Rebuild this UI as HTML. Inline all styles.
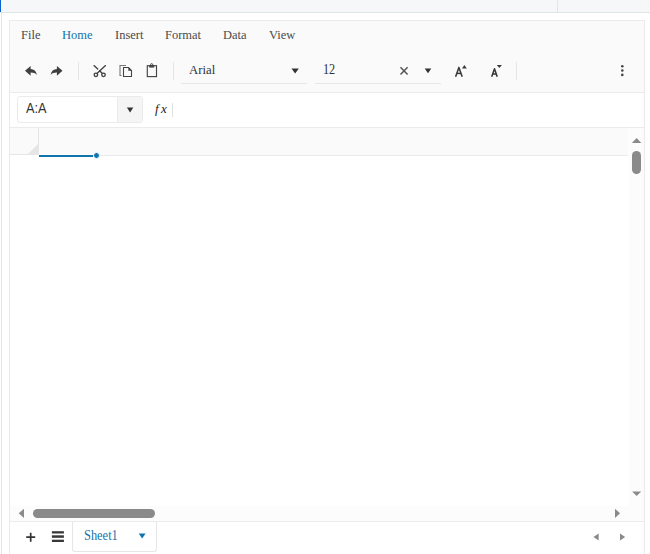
<!DOCTYPE html>
<html><head><meta charset="utf-8">
<style>
html,body{margin:0;padding:0;background:#fff;width:650px;height:554px;overflow:hidden;position:relative;}
div,span{box-sizing:border-box;}
.a{position:absolute;}
.serif{font-family:"Liberation Serif",serif;}
.sans{font-family:"Liberation Sans",sans-serif;}
.menu{position:absolute;top:27px;font-family:"Liberation Serif",serif;font-size:13px;color:#4a4a4a;line-height:16px;white-space:nowrap;transform:scale(0.96,1.02);transform-origin:0 12.4px;}
svg{position:absolute;overflow:visible;}
</style></head><body>
<!-- top strip -->
<div class="a" style="left:0;top:0;width:650px;height:12px;background:#f5f7f9;"></div>
<div class="a" style="left:0;top:12px;width:650px;height:1px;background:#dfe6e8;"></div>
<div class="a" style="left:0;top:0;width:1px;height:12px;background:#0d63cc;"></div>
<div class="a" style="left:557px;top:0;width:1px;height:12px;background:#dfe6e8;"></div>
<!-- left page line -->
<div class="a" style="left:1px;top:13px;width:1px;height:541px;background:#dfe6e8;"></div>

<!-- spreadsheet container -->
<div class="a" style="left:9px;top:20px;width:636px;height:540px;border:1px solid #ebebeb;"></div>

<!-- ribbon -->
<div class="a" style="left:10px;top:21px;width:634px;height:71px;background:#fafafa;"></div>
<div class="a" style="left:10px;top:92px;width:634px;height:1px;background:#ebebeb;"></div>

<div class="menu" style="left:21px;">File</div>
<div class="menu" style="left:62px;color:#1174ad;">Home</div>
<div class="menu" style="left:115px;">Insert</div>
<div class="menu" style="left:165px;">Format</div>
<div class="menu" style="left:223px;">Data</div>
<div class="menu" style="left:269px;">View</div>

<!-- toolbar separators -->
<div class="a" style="left:78px;top:62px;width:1px;height:18px;background:#e6e6e6;"></div>
<div class="a" style="left:173px;top:62px;width:1px;height:18px;background:#e6e6e6;"></div>
<div class="a" style="left:516px;top:62px;width:1px;height:18px;background:#e6e6e6;"></div>

<!-- undo -->
<svg style="left:0;top:0" width="650" height="554" viewBox="0 0 650 554">
  <path d="M25 70.8 L30.6 65.9 L30.6 69.1 C34 69.2 36.3 71.3 36.9 74.9 C35.5 73.4 33.5 72.6 30.6 72.6 L30.6 75.7 Z" fill="#404040"/>
  <path d="M 62.5 70.8 L 56.9 65.9 L 56.9 69.1 C 53.5 69.2 51.2 71.3 50.6 74.9 C 52.0 73.4 54.0 72.6 56.9 72.6 L 56.9 75.7 Z" fill="#404040"/>
  <!-- cut -->
  <g fill="none" stroke="#404040" stroke-width="1.35" stroke-linecap="round">
    <path d="M94 65.6 L97.7 69"/>
    <path d="M105.5 65.6 L97.2 73.2"/>
    <path d="M99.6 70.8 L102.2 73.3"/>
    <circle cx="95.9" cy="74.8" r="1.75"/>
    <circle cx="103.5" cy="74.8" r="1.75"/>
  </g>
  <!-- copy -->
  <path d="M126 65.5 L120 65.5 L120 75.5 L121.5 75.5" fill="none" stroke="#777" stroke-width="1.1"/>
  <path d="M123.5 67.5 L128.5 67.5 L131.5 70.5 L131.5 76.5 L123.5 76.5 Z" fill="none" stroke="#444" stroke-width="1.1"/>
  <path d="M128.3 67 L132 70.7 L128.3 70.7 Z" fill="#444"/>
  <!-- paste -->
  <rect x="147.3" y="65.7" width="9.2" height="10.9" fill="none" stroke="#444" stroke-width="1.15"/>
  <path d="M149.2 65 L154.2 65 L154.2 67.6 L149.2 67.6 Z" fill="#444"/>
  <circle cx="151.65" cy="64.7" r="1.05" fill="none" stroke="#444" stroke-width="1"/>
</svg>

<!-- font name -->
<div class="a serif" style="left:188.6px;top:62px;font-size:13px;line-height:16px;color:#333;transform:scale(0.98,1.02);transform-origin:0 12.4px;">Arial</div>
<svg style="left:0;top:0" width="650" height="554"><path d="M291.5 68.5 L298.8 68.5 L295.15 73.5 Z" fill="#333"/></svg>
<div class="a" style="left:181px;top:83px;width:126px;height:1px;background:#e6e6e6;"></div>

<!-- font size -->
<div class="a serif" style="left:322.6px;top:62px;font-size:13px;line-height:16px;color:#333;transform:scale(0.94,1.04);transform-origin:0 12.4px;">12</div>
<svg style="left:0;top:0" width="650" height="554">
  <path d="M400.5 67.3 L407.6 74.6 M407.6 67.3 L400.5 74.6" stroke="#555" stroke-width="1.5" fill="none"/>
  <path d="M424.7 68.5 L431.3 68.5 L428 73.3 Z" fill="#333"/>
</svg>
<div class="a" style="left:315px;top:83px;width:126px;height:1px;background:#e6e6e6;"></div>

<!-- font increase / decrease -->
<svg style="left:0;top:0" width="650" height="554">
  <g fill="none" stroke="#3a3a3a" stroke-width="1.55" stroke-linejoin="round">
    <path d="M455.6 76.8 L458.9 67.4 L462.2 76.8"/>
    <path d="M456.9 73.4 L460.9 73.4"/>
    <path d="M491.7 76.8 L494.5 68.8 L497.2 76.8"/>
    <path d="M492.8 74 L496.2 74"/>
  </g>
  <path d="M462 68.6 L466.8 68.6 L464.4 65 Z" fill="#3a3a3a"/>
  <path d="M496.8 65 L501.9 65 L499.35 67.9 Z" fill="#3a3a3a"/>
</svg>
<!-- more dots -->
<svg style="left:0;top:0" width="650" height="554" fill="#444">
  <circle cx="622.3" cy="66.2" r="1.3"/><circle cx="622.3" cy="70.5" r="1.3"/><circle cx="622.3" cy="74.9" r="1.3"/>
</svg>

<!-- formula bar -->
<div class="a" style="left:10px;top:127px;width:634px;height:1px;background:#ebebeb;"></div>
<div class="a" style="left:17px;top:96px;width:126px;height:27px;border:1px solid #ebebeb;border-radius:3px;background:#fff;overflow:hidden;">
  <div class="a" style="left:99px;top:0;width:26px;height:25px;background:#f5f5f5;border-left:1px solid #ebebeb;"></div>
</div>
<div class="a sans" style="left:26px;top:101px;font-size:13px;line-height:15px;color:#333;transform:scale(0.98,1.08);transform-origin:0 12px;">A:A</div>
<svg style="left:0;top:0" width="650" height="554"><path d="M126.9 107.4 L133.3 107.4 L130.1 112.6 Z" fill="#333"/></svg>
<div class="a serif" style="left:155px;top:101px;font-size:13px;line-height:16px;font-style:italic;letter-spacing:2.4px;color:#222;">fx</div>
<div class="a" style="left:172px;top:103px;width:1px;height:14px;background:#e0e0e0;"></div>

<!-- column header -->
<div class="a" style="left:10px;top:128px;width:618px;height:27px;background:#fafafa;"></div>
<div class="a" style="left:10px;top:154px;width:28px;height:1px;background:#e6e6e6;"></div>
<div class="a" style="left:10px;top:155px;width:29px;height:1px;background:#fff;"></div>
<div class="a" style="left:38px;top:128px;width:1px;height:27px;background:#e6e6e6;"></div>
<svg style="left:0;top:0" width="650" height="554"><path d="M28 154 L38 144 L38 154 Z" fill="#e6e6e6"/></svg>
<div class="a" style="left:39px;top:155px;width:589px;height:1px;background:#ebebeb;"></div>
<div class="a" style="left:39px;top:154px;width:55px;height:1px;background:#fff;"></div>
<div class="a" style="left:39px;top:155px;width:54px;height:2px;background:#1174ad;"></div>
<div class="a" style="left:93px;top:152px;width:7px;height:7px;border-radius:50%;background:#1174ad;border:1px solid #fff;"></div>

<!-- vertical scrollbar -->
<div class="a" style="left:628px;top:128px;width:1px;height:378px;background:#fff;"></div><div class="a" style="left:629px;top:128px;width:15px;height:378px;background:#fcfcfc;"></div>
<svg style="left:0;top:0" width="650" height="554" fill="#8a8a8a">
  <path d="M631.9 143 L641.3 143 L636.6 138 Z"/>
  <path d="M632.1 491.4 L641.2 491.4 L636.65 496 Z"/>
</svg>
<div class="a" style="left:632px;top:151px;width:9px;height:23px;border-radius:4.5px;background:#8a8a8a;"></div>

<!-- horizontal scrollbar -->
<div class="a" style="left:10px;top:506px;width:634px;height:15px;background:#fcfcfc;"></div>
<div class="a" style="left:10px;top:521px;width:634px;height:1px;background:#ebebeb;"></div>
<svg style="left:0;top:0" width="650" height="554" fill="#8a8a8a">
  <path d="M24 508.7 L24 518 L18.7 513.35 Z"/>
  <path d="M615 508.7 L615 518 L620 513.35 Z"/>
</svg>
<div class="a" style="left:33px;top:509px;width:122px;height:9px;border-radius:4.5px;background:#8a8a8a;"></div>

<!-- sheet tabs -->
<svg style="left:0;top:0" width="650" height="554">
  <path d="M26.2 537.2 L35.2 537.2 M30.7 532.7 L30.7 541.7" stroke="#333" stroke-width="1.7" fill="none"/>
  <g fill="#383838"><rect x="51.9" y="531.2" width="12" height="2.3"/><rect x="51.9" y="535.3" width="12" height="2.5"/><rect x="51.9" y="539.7" width="12" height="2.3"/></g>
</svg>

<div class="a" style="left:72px;top:522px;width:85px;height:30px;border:1px solid #e6e6e6;border-top:none;border-radius:0 0 3px 3px;background:#fff;"></div>
<div class="a serif" style="left:83.5px;top:528px;font-size:13px;line-height:16px;color:#1174ad;transform:scale(0.955,1.04);transform-origin:0 12.4px;">Sheet1</div>
<svg style="left:0;top:0" width="650" height="554" fill="#1174ad"><path d="M138.7 533.4 L145.6 533.4 L142.15 538.6 Z"/></svg>

<svg style="left:0;top:0" width="650" height="554" fill="#8a8a8a">
  <path d="M598.7 533.4 L598.7 540.4 L593.4 536.9 Z"/>
  <path d="M620 533.4 L620 540.4 L625.2 536.9 Z"/>
</svg>
</body></html>
